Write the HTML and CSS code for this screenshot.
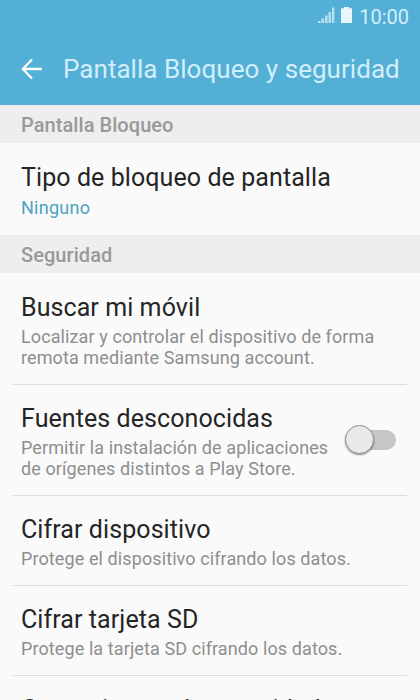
FILE: index.html
```html
<!DOCTYPE html>
<html lang="es">
<head>
<meta charset="utf-8">
<title>Pantalla Bloqueo y seguridad</title>
<link rel="stylesheet" href="styles.css">
</head>
<body>
<header class="header">
  <div class="status">
    <svg class="signal" width="17" height="16" viewBox="0 0 17 16"><path d="M0 16v-2h2.6v2zM3.5 16v-4.5h2.6V16zM7 16V8.5h2.6V16zM10.5 16V5h2.6v11zM14 16V.5h2.4V16z"/></svg>
    <svg class="battery" width="11" height="16" viewBox="0 0 11 16"><path d="M3 0h5v1.2h3V16H0V1.2h3z"/></svg>
    <span class="clock">10:00</span>
  </div>
  <div class="bar">
    <svg class="back" width="22" height="22" viewBox="0 0 22 22"><path d="M21 11H2M11 1.5L1.8 11l9.2 9.5"/></svg>
    <h1 class="title">Pantalla Bloqueo y seguridad</h1>
  </div>
</header>
<main>
  <h2 class="section">Pantalla Bloqueo</h2>
  <div class="item item-lock"><div class="name">Tipo de bloqueo de pantalla</div><div class="desc value">Ninguno</div></div>
  <h2 class="section">Seguridad</h2>
  <div class="item item-two"><div class="name">Buscar mi móvil</div><div class="desc">Localizar y controlar el dispositivo de forma<br>remota mediante Samsung account.</div></div>
  <div class="item item-two"><div class="name">Fuentes desconocidas</div><div class="desc">Permitir la instalación de aplicaciones<br>de orígenes distintos a Play Store.</div><div class="switch"><div class="knob"></div></div></div>
  <div class="item item-one"><div class="name">Cifrar dispositivo</div><div class="desc">Protege el dispositivo cifrando los datos.</div></div>
  <div class="item item-one"><div class="name">Cifrar tarjeta SD</div><div class="desc">Protege la tarjeta SD cifrando los datos.</div></div>
  <div class="item item-last"><div class="name">Otros ajustes de seguridad</div></div>
</main>
</body>
</html>
```
FILE: styles.css
```css
* { box-sizing: border-box; }
body { margin: 0; height: 700px; overflow: hidden; background: #fafafa; font-family: Roboto, sans-serif; color: #252525; }
.header { height: 105px; background: #53afd5; color: #d2eefb; }
.status { height: 32px; display: flex; align-items: center; justify-content: flex-end; padding-right: 11px; }
.status svg { position: relative; top: -1px; }
.signal { fill: #b5e0f2; }
.battery { margin: 0 7px 0 6px; fill: #e8f6fc; }
.clock { font-size: 20px; margin-top: 1px; }
.bar { height: 73px; display: flex; align-items: center; padding-left: 21px; }
.back { fill: none; stroke: #fff; stroke-width: 2.3; }
.title { margin: 1px 0 0 20px; font-size: 26px; font-weight: 400; letter-spacing: .04px; white-space: nowrap; }
.section { margin: 0; height: 38px; padding-left: 21px; background: #eee; color: #999; font-size: 20px; line-height: 40px; font-weight: 500; letter-spacing: .06px; }
.item { position: relative; padding: 20px 0 0 21px; }
.item-lock { height: 92px; }
.item-two { height: 111px; }
.item-one { height: 90px; }
.item-last { height: 30px; }
.item-two::after, .item-one::after { content: ""; position: absolute; left: 13px; right: 13px; bottom: -1px; height: 1px; background: #dcdcdc; }
.name { font-size: 25px; line-height: 30px; letter-spacing: .08px; white-space: nowrap; }
.desc { margin-top: 3px; font-size: 18px; line-height: 21px; letter-spacing: .1px; color: #8e8e8e; white-space: nowrap; }
.value { margin-top: 4px; letter-spacing: .25px; color: #4ba3c3; }
.switch { position: absolute; left: 346px; top: 46px; width: 50px; height: 20px; border-radius: 10px; background: #c6c6c6; }
.knob { position: absolute; left: -1px; top: -5px; width: 29px; height: 29px; border-radius: 50%; background: #e9e9e9; border: 1px solid #999; box-shadow: 0 1px 2px rgba(0, 0, 0, .45); }
```
